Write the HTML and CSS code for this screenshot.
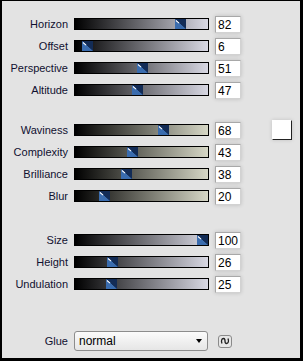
FILE: index.html
```html
<!DOCTYPE html>
<html lang="en">
<head>
  <meta charset="UTF-8">
  <title>Wave settings</title>
  <link rel="stylesheet" href="styles.css">
</head>
<body>
  <div class="frame">
    <div class="group">
      <div class="row">
        <span class="label">Horizon</span>
        <div class="track cool"><span class="thumb" style="left: 100px"></span></div>
        <div class="val">82</div>
      </div>
      <div class="row">
        <span class="label">Offset</span>
        <div class="track cool"><span class="thumb" style="left: 7px"></span></div>
        <div class="val">6</div>
      </div>
      <div class="row">
        <span class="label">Perspective</span>
        <div class="track cool"><span class="thumb" style="left: 62px"></span></div>
        <div class="val">51</div>
      </div>
      <div class="row">
        <span class="label">Altitude</span>
        <div class="track cool"><span class="thumb" style="left: 57px"></span></div>
        <div class="val">47</div>
      </div>
    </div>

    <div class="group second">
      <div class="row">
        <span class="label">Waviness</span>
        <div class="track warm"><span class="thumb" style="left: 83px"></span></div>
        <div class="val">68</div>
        <button class="swatch"></button>
      </div>
      <div class="row">
        <span class="label">Complexity</span>
        <div class="track warm"><span class="thumb" style="left: 52px"></span></div>
        <div class="val">43</div>
      </div>
      <div class="row">
        <span class="label">Brilliance</span>
        <div class="track warm"><span class="thumb" style="left: 46px"></span></div>
        <div class="val">38</div>
      </div>
      <div class="row">
        <span class="label">Blur</span>
        <div class="track warm"><span class="thumb" style="left: 24px"></span></div>
        <div class="val">20</div>
      </div>
    </div>

    <div class="group third">
      <div class="row">
        <span class="label">Size</span>
        <div class="track cool"><span class="thumb" style="left: 122px"></span></div>
        <div class="val">100</div>
      </div>
      <div class="row">
        <span class="label">Height</span>
        <div class="track cool"><span class="thumb" style="left: 32px"></span></div>
        <div class="val">26</div>
      </div>
      <div class="row">
        <span class="label">Undulation</span>
        <div class="track cool"><span class="thumb" style="left: 31px"></span></div>
        <div class="val">25</div>
      </div>
    </div>

    <div class="row glue">
      <span class="label">Glue</span>
      <div class="select">
        <span>normal</span>
        <span class="arrow"></span>
      </div>
      <button class="link">
        <svg width="10" height="8" viewBox="0 0 10 8"><path d="M2 6.5 C1 4 1.5 1.5 3.5 1.5 C5 1.5 5 3 5 4 C5 5 5 6.5 6.5 6.5 C8.5 6.5 9 4 8 1.5" fill="none" stroke="#222" stroke-width="1.3"/></svg>
      </button>
    </div>
  </div>
</body>
</html>
```

FILE: styles.css
```css
body {
  margin: 0;
  font-family: "Liberation Sans", Arial, sans-serif;
  font-size: 11px;
}
.frame {
  width: 303px;
  height: 361px;
  box-sizing: border-box;
  background: #e3e3e3;
  border-style: solid;
  border-color: #000;
  border-width: 1px 3px 3px 2px;
  padding-top: 12px;
}
.group.second {
  margin-top: 18px;
}
.group.third {
  margin-top: 22px;
}
.row {
  display: flex;
  align-items: center;
  height: 22px;
}
.label {
  width: 66px;
  margin-right: 6px;
  text-align: right;
  color: #101030;
}
.track {
  position: relative;
  width: 135px;
  height: 12px;
  box-sizing: border-box;
  border: 1px solid #000;
}
.track.cool {
  background: linear-gradient(to right, #000, #d8d8e3);
}
.track.warm {
  background: linear-gradient(to right, #000, #d6d7c6);
}
.thumb {
  position: absolute;
  top: 0;
  width: 11px;
  height: 10px;
  background:
    linear-gradient(to bottom left, transparent 48%, #3a6cae 52%),
    #132c56;
}
.thumb::before {
  content: "";
  position: absolute;
  left: 1px;
  top: 1px;
  width: 4px;
  height: 1px;
  background: #fff;
  transform: rotate(40deg);
  transform-origin: left;
}
.val {
  width: 26px;
  height: 17px;
  box-sizing: border-box;
  margin-left: 6px;
  padding: 1px 0 0 2px;
  background: #fff;
  border: 1px solid #d2d2d2;
  border-top-color: #a8a8a8;
  border-left-color: #a8a8a8;
  box-shadow: 0 0 4px rgba(0, 0, 0, 0.18);
  color: #000;
  font-size: 12px;
  line-height: 14px;
}
.swatch {
  width: 20px;
  height: 20px;
  margin-left: 31px;
  padding: 0;
  background: #fff;
  border: 1px solid #fff;
  border-right-color: #222;
  border-bottom-color: #222;
  box-shadow: 0 0 4px rgba(0, 0, 0, 0.15);
}
.glue {
  margin-top: 35px;
}
.select {
  width: 134px;
  height: 20px;
  box-sizing: border-box;
  display: flex;
  align-items: center;
  justify-content: space-between;
  padding: 0 5px 0 4px;
  border: 1px solid #8c8c8c;
  border-radius: 3px;
  background: linear-gradient(#fbfbfb, #e6e6e6);
  color: #000;
  font-size: 12px;
}
.arrow {
  width: 0;
  height: 0;
  border-left: 3px solid transparent;
  border-right: 3px solid transparent;
  border-top: 4px solid #000;
}
.link {
  width: 14px;
  height: 13px;
  margin-left: 10px;
  padding: 0;
  display: flex;
  align-items: center;
  justify-content: center;
  background: #e6e6e6;
  border: 1px solid #8a8a8a;
  border-radius: 3px;
}
```
